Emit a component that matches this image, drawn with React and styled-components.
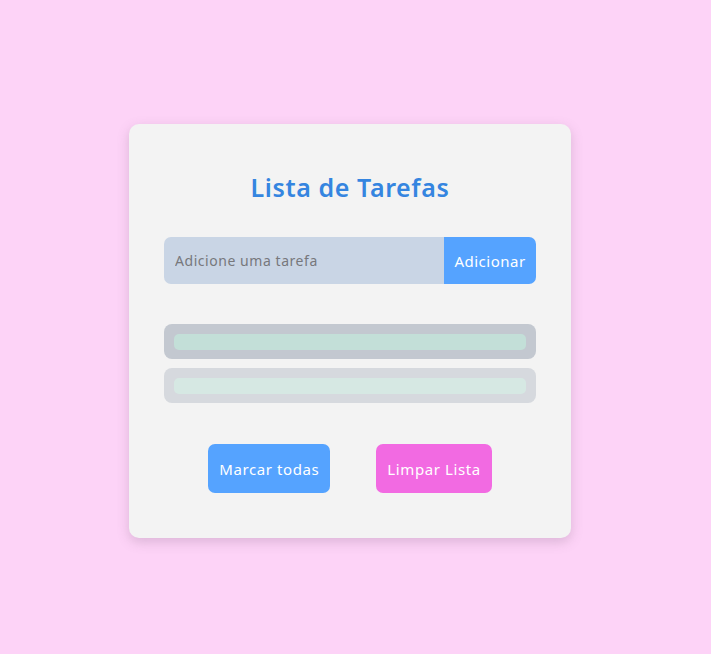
import React, { useState } from "react";
import styled, { createGlobalStyle } from "styled-components";

const GlobalStyle = createGlobalStyle`
  * { box-sizing: border-box; }
  body {
    margin: 0;
    background: #fdd3f7;
    font-family: "Noto Sans", "Open Sans", sans-serif;
  }
`;

const App = () => {
  const [tasks] = useState([{ id: 1, done: false }, { id: 2, done: true }]);

  return (
    <Page>
      <GlobalStyle />
      <Card>
        <Title>Lista de Tarefas</Title>
        <InputRow>
          <TaskInput placeholder="Adicione uma tarefa" />
          <AddButton>Adicionar</AddButton>
        </InputRow>
        <TaskList>
          {tasks.map((t) => (
            <TaskItem key={t.id} $faded={t.done}>
              <TaskBar $faded={t.done} />
            </TaskItem>
          ))}
        </TaskList>
        <Actions>
          <ActionButton $color="#55a3ff">Marcar todas</ActionButton>
          <ActionButton $color="#f26ae2">Limpar Lista</ActionButton>
        </Actions>
      </Card>
    </Page>
  );
};

export default App;

const Page = styled.div`
  min-height: 100vh;
  display: flex;
  align-items: center;
  justify-content: center;
  padding: 8px 11px 0 0;
`;

const Card = styled.div`
  width: 442px;
  background: #f3f3f3;
  border-radius: 10px;
  padding: 45px 35px;
  box-shadow: 0 4px 12px rgba(120, 90, 120, 0.25);
  display: flex;
  flex-direction: column;
`;

const Title = styled.h2`
  margin: 0;
  text-align: center;
  font-size: 25px;
  line-height: 36px;
  font-weight: 600;
  letter-spacing: 0.6px;
  color: #3585e0;
`;

const InputRow = styled.div`
  margin-top: 32px;
  display: flex;
  height: 47px;
  border-radius: 7px;
  overflow: hidden;
`;

const TaskInput = styled.input`
  flex: 1;
  border: none;
  outline: none;
  background: #c9d5e5;
  padding: 0 11px;
  font-family: inherit;
  font-size: 14px;
  letter-spacing: 0.55px;
  color: #444;
  &::placeholder {
    color: #77787c;
  }
`;

const AddButton = styled.button`
  width: 92px;
  border: none;
  background: #55a3ff;
  color: #fff;
  font-family: inherit;
  font-size: 15px;
  letter-spacing: 0.5px;
  cursor: pointer;
  padding: 0;
`;

const TaskList = styled.ul`
  list-style: none;
  margin: 40px 0 0;
  padding: 0;
  display: flex;
  flex-direction: column;
  gap: 9px;
`;

const TaskItem = styled.li`
  height: 35px;
  border-radius: 8px;
  padding: 10px;
  background: ${(p) => (p.$faded ? "#d6d9de" : "#c3c8d0")};
`;

const TaskBar = styled.div`
  height: 16px;
  border-radius: 5px;
  background: ${(p) => (p.$faded ? "#d6e8e3" : "#c3dfd8")};
`;

const Actions = styled.div`
  margin-top: 41px;
  display: flex;
  justify-content: center;
  gap: 46px;
`;

const ActionButton = styled.button`
  height: 49px;
  padding: 0 11px;
  border: none;
  border-radius: 7px;
  background: ${(p) => p.$color};
  color: #fff;
  font-family: inherit;
  font-size: 15px;
  letter-spacing: 0.6px;
  cursor: pointer;
`;
